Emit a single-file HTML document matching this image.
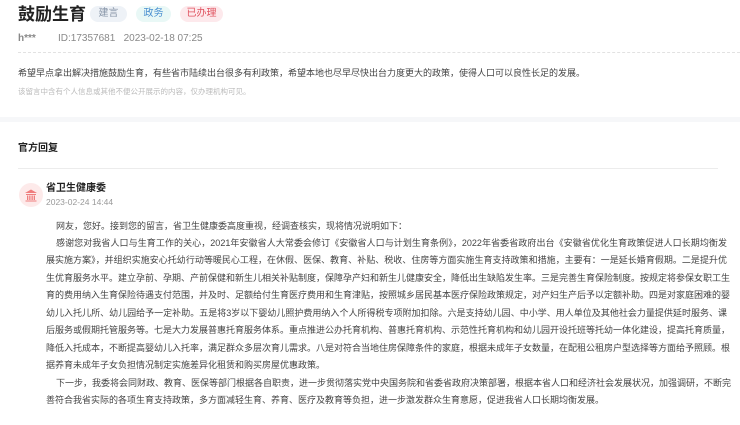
<!DOCTYPE html>
<html><head><meta charset="utf-8"><style>
*{margin:0;padding:0;box-sizing:border-box}
body{width:740px;height:425px;background:#fff;font-family:"Liberation Sans","Noto Sans CJK SC",sans-serif;color:#333;position:relative;overflow:hidden}
.a{position:absolute;white-space:nowrap}
.tag{position:absolute;top:6px;height:16px;border-radius:8px;font-size:10px;line-height:16px;text-align:center}
.l{position:absolute;left:46px;width:681px;font-size:9px;line-height:12px;text-align:justify;text-align-last:justify;white-space:nowrap;color:#444}
</style></head><body>
<div class="a" style="left:18px;top:3px;font-size:17px;font-weight:bold;color:#222;line-height:24px">鼓励生育</div>
<div class="tag" style="left:90px;width:37px;background:#eef2f7;color:#8593a6">建言</div>
<div class="tag" style="left:136px;width:35px;background:#e9f8f6;color:#4a8fd0">政务</div>
<div class="tag" style="left:180px;width:43px;background:#fde9ec;color:#e0525f">已办理</div>
<div class="a" style="left:18px;top:33px;font-size:10px;line-height:12px;color:#888"><b>h***</b></div>
<div class="a" style="left:58px;top:33px;font-size:10px;line-height:12px;color:#888">ID:17357681&nbsp;&nbsp;&nbsp;2023-02-18 07:25</div>
<div class="a" style="left:18px;top:52px;width:722px;border-top:1px dashed #e2e2e2"></div>
<div class="a" style="left:18px;top:67px;font-size:9px;line-height:12px;color:#444">希望早点拿出解决措施鼓励生育，有些省市陆续出台很多有利政策，希望本地也尽早尽快出台力度更大的政策，使得人口可以良性长足的发展。</div>
<div class="a" style="left:18px;top:87px;font-size:7.5px;line-height:10px;color:#bbb">该留言中含有个人信息或其他不便公开展示的内容，仅办理机构可见。</div>
<div class="a" style="left:0;top:117px;width:740px;height:5px;background:#f6f7f9"></div>
<div class="a" style="left:18px;top:142px;font-size:10px;font-weight:bold;color:#222;line-height:13px">官方回复</div>
<div class="a" style="left:18px;top:168px;width:700px;border-top:1px solid #ececec"></div>
<div class="a" style="left:19px;top:183px;width:24px;height:24px;border-radius:50%;background:#fdeaea">
<svg width="24" height="24" viewBox="0 0 24 24"><path d="M6 10 L12 6.5 L18 10 Z M7 11h10v1H7z M8 12.5h1.3v4.5H8z M10.2 12.5h1.3v4.5h-1.3z M12.5 12.5h1.3v4.5h-1.3z M14.7 12.5H16v4.5h-1.3z M6.5 17.5h11v1h-11z" fill="#ef7d7d"/></svg></div>
<div class="a" style="left:46px;top:183px;font-size:10px;font-weight:bold;color:#222;line-height:12px">省卫生健康委</div>
<div class="a" style="left:46px;top:197px;font-size:8.5px;color:#999;line-height:10px">2023-02-24 14:44</div>
<div class="a" style="left:56px;top:220px;font-size:9px;line-height:12px;color:#444">网友，您好。接到您的留言，省卫生健康委高度重视，经调查核实，现将情况说明如下：</div>
<div class="l" style="left:56px;width:671px;top:237px">感谢您对我省人口与生育工作的关心，2021年安徽省人大常委会修订《安徽省人口与计划生育条例》，2022年省委省政府出台《安徽省优化生育政策促进人口长期均衡发</div>
<div class="l" style="top:254px">展实施方案》，并组织实施安心托幼行动等暖民心工程，在休假、医保、教育、补贴、税收、住房等方面实施生育支持政策和措施，主要有：一是延长婚育假期。二是提升优</div>
<div class="l" style="top:272px">生优育服务水平。建立孕前、孕期、产前保健和新生儿相关补贴制度，保障孕产妇和新生儿健康安全，降低出生缺陷发生率。三是完善生育保险制度。按规定将参保女职工生</div>
<div class="l" style="top:289px">育的费用纳入生育保险待遇支付范围，并及时、足额给付生育医疗费用和生育津贴，按照城乡居民基本医疗保险政策规定，对产妇生产后予以定额补助。四是对家庭困难的婴</div>
<div class="l" style="top:307px">幼儿入托儿所、幼儿园给予一定补助。五是将3岁以下婴幼儿照护费用纳入个人所得税专项附加扣除。六是支持幼儿园、中小学、用人单位及其他社会力量提供延时服务、课</div>
<div class="l" style="top:324px">后服务或假期托管服务等。七是大力发展普惠托育服务体系。重点推进公办托育机构、普惠托育机构、示范性托育机构和幼儿园开设托班等托幼一体化建设，提高托育质量，</div>
<div class="l" style="top:342px">降低入托成本，不断提高婴幼儿入托率，满足群众多层次育儿需求。八是对符合当地住房保障条件的家庭，根据未成年子女数量，在配租公租房户型选择等方面给予照顾。根</div>
<div class="a" style="left:46px;top:359px;font-size:9px;line-height:12px;color:#444">据养育未成年子女负担情况制定实施差异化租赁和购买房屋优惠政策。</div>
<div class="l" style="left:56px;width:671px;top:377px">下一步，我委将会同财政、教育、医保等部门根据各自职责，进一步贯彻落实党中央国务院和省委省政府决策部署，根据本省人口和经济社会发展状况，加强调研，不断完</div>
<div class="a" style="left:46px;top:394px;font-size:9px;line-height:12px;color:#444">善符合我省实际的各项生育支持政策，多方面减轻生育、养育、医疗及教育等负担，进一步激发群众生育意愿，促进我省人口长期均衡发展。</div>
</body></html>
